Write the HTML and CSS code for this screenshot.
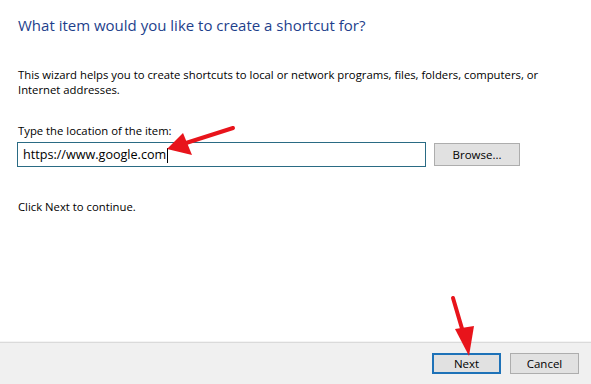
FILE: index.html
```html
<!DOCTYPE html>
<html lang="en">
<head>
  <meta charset="UTF-8" />
  <title>Create Shortcut</title>
  <link rel="stylesheet" href="styles.css">
</head>
<body>

  <div class="wizard">
    <div class="content">
      <h2>What item would you like to create a shortcut for?</h2>

      <p class="intro">This wizard helps you to create shortcuts to local or network programs, files, folders, computers, or Internet addresses.</p>

      <label for="location">Type the location of the item:</label>
      <div class="row">
        <div class="field" id="location">https://www.google.com<span class="caret"></span></div>
        <button class="btn browse">Browse...</button>
      </div>

      <p class="hint">Click Next to continue.</p>
    </div>

    <div class="footer">
      <button class="btn next">Next</button>
      <button class="btn">Cancel</button>
    </div>

    <!-- annotation arrows -->
    <svg class="arrows" width="591" height="384" viewBox="0 0 591 384">
      <line x1="233" y1="128" x2="186" y2="143" stroke="#e8141b" stroke-width="4" stroke-linecap="round"/>
      <polygon points="167,149 183,133 192,155" fill="#e8141b"/>
      <line x1="453" y1="298" x2="463" y2="332" stroke="#e8141b" stroke-width="4" stroke-linecap="round"/>
      <polygon points="469,356 455,329 474,326" fill="#e8141b"/>
    </svg>
  </div>

</body>
</html>
```

FILE: styles.css
```css
body {
  margin: 0;
  font-family: 'Open Sans', 'Noto Sans', sans-serif;
  color: #000;
  background: #fff;
}
.wizard {
  position: relative;
  width: 591px;
  height: 384px;
  display: flex;
  flex-direction: column;
}
.content {
  flex: 1;
  padding: 13px 18px 0 18px;
  border-bottom: 1px solid #f4f4f4;
}
h2 {
  margin: 0;
  font-size: 15px;
  font-weight: normal;
  color: #1e3f8c;
  line-height: 24px;
}
.intro {
  margin: 30px 0 0 0;
  font-size: 11.3px;
  line-height: 15px;
  width: 540px;
}
label {
  display: block;
  margin-top: 26px;
  font-size: 11.3px;
  line-height: 15px;
}
.row {
  display: flex;
  align-items: center;
  margin-top: 4px;
  margin-left: -1px;
}
.field {
  width: 402px;
  height: 23px;
  border: 1px solid #2a6b84;
  padding-left: 5px;
  font-size: 12.6px;
  line-height: 23px;
}
.caret {
  display: inline-block;
  width: 1px;
  height: 15px;
  background: #000;
  vertical-align: middle;
  margin-left: 1px;
}
.btn {
  font-family: inherit;
  font-size: 11.5px;
  color: #000;
  background: #e1e1e1;
  border: 1px solid #adadad;
  width: 69px;
  height: 21px;
  padding: 0;
}
.browse {
  width: 86px;
  height: 23px;
  margin-left: 8px;
}
.hint {
  margin: 32px 0 0 0;
  font-size: 11.3px;
  line-height: 15px;
}
.footer {
  height: 41px;
  background: #f0f0f0;
  border-top: 1px solid #dadada;
  display: flex;
  justify-content: flex-end;
  align-items: center;
  gap: 9px;
  padding-right: 12px;
}
.next {
  border: 2px solid #1e72b8;
}
.arrows {
  position: absolute;
  left: 0;
  top: 0;
  pointer-events: none;
}
```
